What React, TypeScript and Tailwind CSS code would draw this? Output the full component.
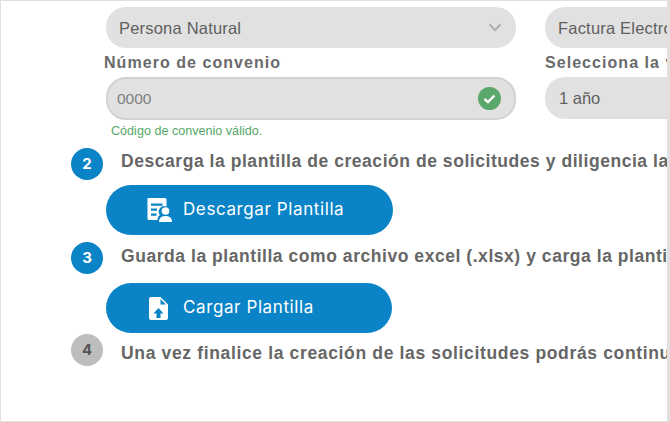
export default function App() {
  const Step = ({ n, text, gray, textClass }: { n: string; text: string; gray?: boolean; textClass: string }) => (
    <div className="flex items-center h-[32px]">
      <div className={`w-[32px] h-[32px] rounded-full flex items-center justify-center shrink-0 text-[15px] font-bold ${gray ? "bg-[#bdbdbd] text-[#555]" : "bg-[#0a84c6] text-white"}`} style={{ fontFamily: "Inter, sans-serif" }}>{n}</div>
      <div className={`ml-[18px] whitespace-nowrap text-[17.5px] font-bold text-[#666] ${textClass}`}>{text}</div>
    </div>
  );
  return (
    <div className="w-[670px] h-[422px] bg-white border border-r-[3px] border-[#e0e0e0] overflow-hidden pl-[70px] pt-[6px] text-[#5f5f5f]" style={{ fontFamily: '"Liberation Sans", sans-serif' }}>
      <div className="ml-[35px] flex gap-[29px] w-[800px]">
        <div className="w-[410px] shrink-0">
          <div className="h-[41px] rounded-[20px] bg-[#e1e1e1] flex items-center justify-between pl-[13px] pr-[14px] text-[16.5px] tracking-[0.2px]">
            <span className="pt-[2px]">Persona Natural</span>
            <svg width="14" height="9" viewBox="0 0 14 9" fill="none" stroke="#b0b0b0" strokeWidth="2"><path d="M1.5 1.5 7 7l5.5-5.5" /></svg>
          </div>
          <div className="mt-[3px] -ml-[2px] h-[26px] text-[16px] font-bold text-[#6a6a6a] tracking-[1.05px]">Número de convenio</div>
          <div className="h-[43px] rounded-[20px] bg-[#e1e1e1] border-2 border-[#d2d2d2] flex items-center justify-between pl-[9px] pr-[13px] text-[15.5px] text-[#808080]">
            <span>0000</span>
            <svg width="23" height="23" viewBox="0 0 23 23"><circle cx="11.5" cy="11.5" r="11.5" fill="#5aa76c" /><path d="M6.5 12 10 15.2 16.5 8.5" fill="none" stroke="#fff" strokeWidth="2.4" /></svg>
          </div>
          <div className="mt-[3px] ml-[5px] text-[12.6px] leading-[16px] text-[#57a868]">Código de convenio válido.</div>
        </div>
        <div className="w-[300px] shrink-0">
          <div className="h-[41px] rounded-[20px] bg-[#e1e1e1] flex items-center pl-[13px] text-[16.5px] tracking-[0.2px]"><span className="pt-[2px]">Factura Electrónica</span></div>
          <div className="mt-[3px] h-[26px] text-[16px] font-bold text-[#6a6a6a] tracking-[1.05px]">Selecciona la vigencia</div>
          <div className="h-[42px] rounded-[20px] bg-[#e1e1e1] flex items-center pl-[14px] text-[16.5px]">1 año</div>
        </div>
      </div>
      <div className="mt-[9px] w-[800px]">
        <Step n="2" textClass="-mt-[6px] tracking-[0.55px]" text="Descarga la plantilla de creación de solicitudes y diligencia la información" />
        <button className="ml-[35px] mt-[5px] w-[287px] h-[50px] rounded-[25px] bg-[#0a84c6] text-white flex items-center pl-[41px] text-[17px] tracking-[0.6px]" style={{ fontFamily: "Inter, sans-serif" }}>
          <svg width="25" height="26" viewBox="0 0 25 26" className="mr-[11px] shrink-0" fill="#fff">
            <path fillRule="evenodd" d="M2 1h16a1.5 1.5 0 0 1 1.500 1.500V9.500a5.500 5.500 0 0 0-6.500 8.500c-1.500.8-2.500 2.500-2.500 5H2a1.500 1.500 0 0 1-1.500-1.500v-20A1.500 1.500 0 0 1 2 1zM4 6.500h11.500v2.200H4zM4 11.500h6v2.200H4zM4 16.500h5.500v2.200H4z" />
            <circle cx="18.500" cy="14" r="3.800" /><path d="M12 25c0-4 2.500-6 6.500-6s6.500 2 6.500 6z" />
          </svg>
          Descargar Plantilla
        </button>
        <div className="mt-[7px]"><Step n="3" textClass="-mt-[4px] tracking-[0.55px]" text="Guarda la plantilla como archivo excel (.xlsx) y carga la plantilla" /></div>
        <button className="ml-[35px] mt-[9px] w-[286px] h-[50px] rounded-[25px] bg-[#0a84c6] text-white flex items-center pl-[43px] text-[17px] tracking-[0.6px]" style={{ fontFamily: "Inter, sans-serif" }}>
          <svg width="19" height="23" viewBox="0 0 19 23" className="mr-[15px] shrink-0" fill="#fff">
            <path fillRule="evenodd" d="M2 0h9.500L19 7.500V21a2 2 0 0 1-2 2H2a2 2 0 0 1-2-2V2a2 2 0 0 1 2-2zM11.500 2v5.500H17zM9.500 11 4.500 16.500h3V21h4v-4.500h3z" />
          </svg>
          Cargar Plantilla
        </button>
        <div className="mt-[1px]"><Step gray n="4" textClass="mt-[6px] tracking-[0.65px]" text="Una vez finalice la creación de las solicitudes podrás continuar con el proceso" /></div>
      </div>
    </div>
  );
}
